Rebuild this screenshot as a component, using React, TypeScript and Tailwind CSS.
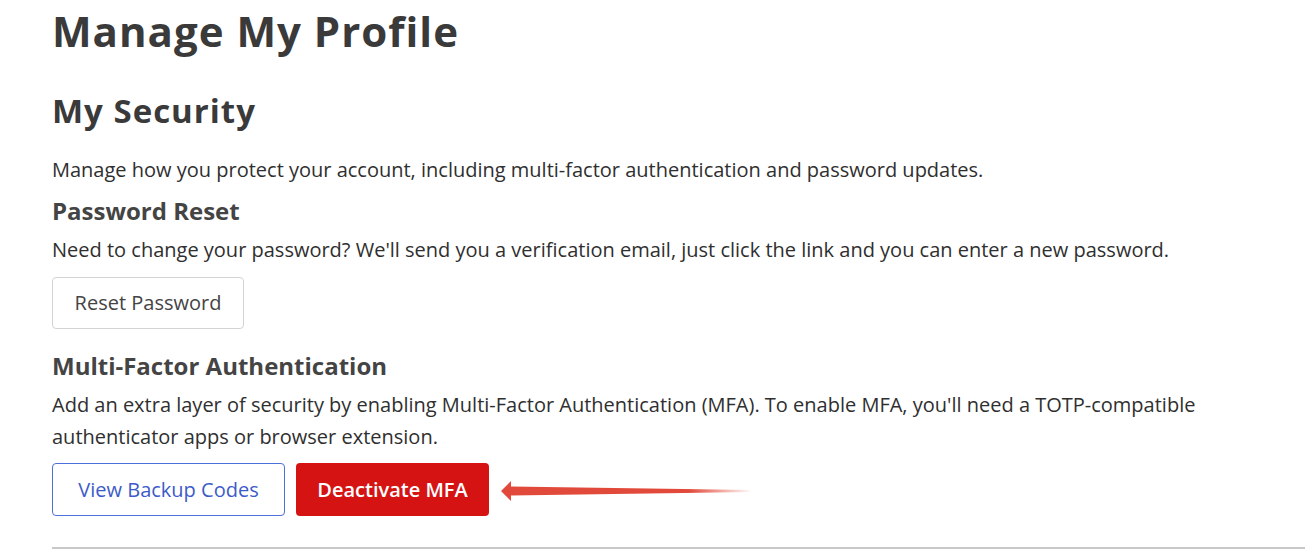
import React from "react";

export default function App() {
  return (
    <div className="w-[1305px] h-[550px] overflow-hidden bg-white" style={{ fontFamily: "'Open Sans', Lato, sans-serif" }}>
      <div className="pl-[52px] pt-[6px] text-[#2f2f2f]">
        <h1 className="text-[42px] font-bold leading-[50px] text-[#3a3a3a] tracking-[1px]">Manage My Profile</h1>
        <h2 className="mt-[34px] text-[33px] font-bold leading-[42px] text-[#3a3a3a] tracking-[1px]">My Security</h2>
        <p className="mt-[22px] text-[20px] leading-[32px]">Manage how you protect your account, including multi-factor authentication and password updates.</p>
        <h3 className="mt-[9px] text-[24px] font-bold leading-[32px] text-[#444444]">Password Reset</h3>
        <p className="mt-[7px] text-[20px] leading-[32px]">Need to change your password? We'll send you a verification email, just click the link and you can enter a new password.</p>
        <button className="mt-[11px] h-[52px] w-[192px] rounded-[4px] border border-[#d4d4d4] bg-white text-[20px] text-[#444444]">Reset Password</button>
        <h3 className="mt-[21px] text-[24px] font-bold leading-[32px] text-[#444444]">Multi-Factor Authentication</h3>
        <p className="mt-[7px] text-[20px] leading-[32px]">Add an extra layer of security by enabling Multi-Factor Authentication (MFA). To enable MFA, you'll need a TOTP-compatible<br />authenticator apps or browser extension.</p>
        <div className="mt-[10px] flex items-center gap-[11px]">
          <button className="h-[53px] w-[233px] rounded-[4px] border-[1.5px] border-[#4d6fd8] bg-white text-[20px] text-[#3c5bc9]">View Backup Codes</button>
          <button className="h-[53px] w-[193px] rounded-[4px] bg-[#d61313] text-[20px] font-semibold text-white">Deactivate MFA</button>
          <svg width="252" height="22" viewBox="0 0 252 22" className="mt-[2px]">
            <defs>
              <linearGradient id="g" x1="0" x2="1" y1="0" y2="0">
                <stop offset="0" stopColor="#e14a3a" />
                <stop offset="0.75" stopColor="#e14a3a" />
                <stop offset="1" stopColor="#e14a3a" stopOpacity="0" />
              </linearGradient>
            </defs>
            <path d="M1 11 L11 1 L11 6.5 L252 10 L252 12 L11 15.5 L11 21 Z" fill="url(#g)" />
          </svg>
        </div>
        <div className="mt-[31px] h-[2px] bg-[#c8c8c8]" />
      </div>
    </div>
  );
}
